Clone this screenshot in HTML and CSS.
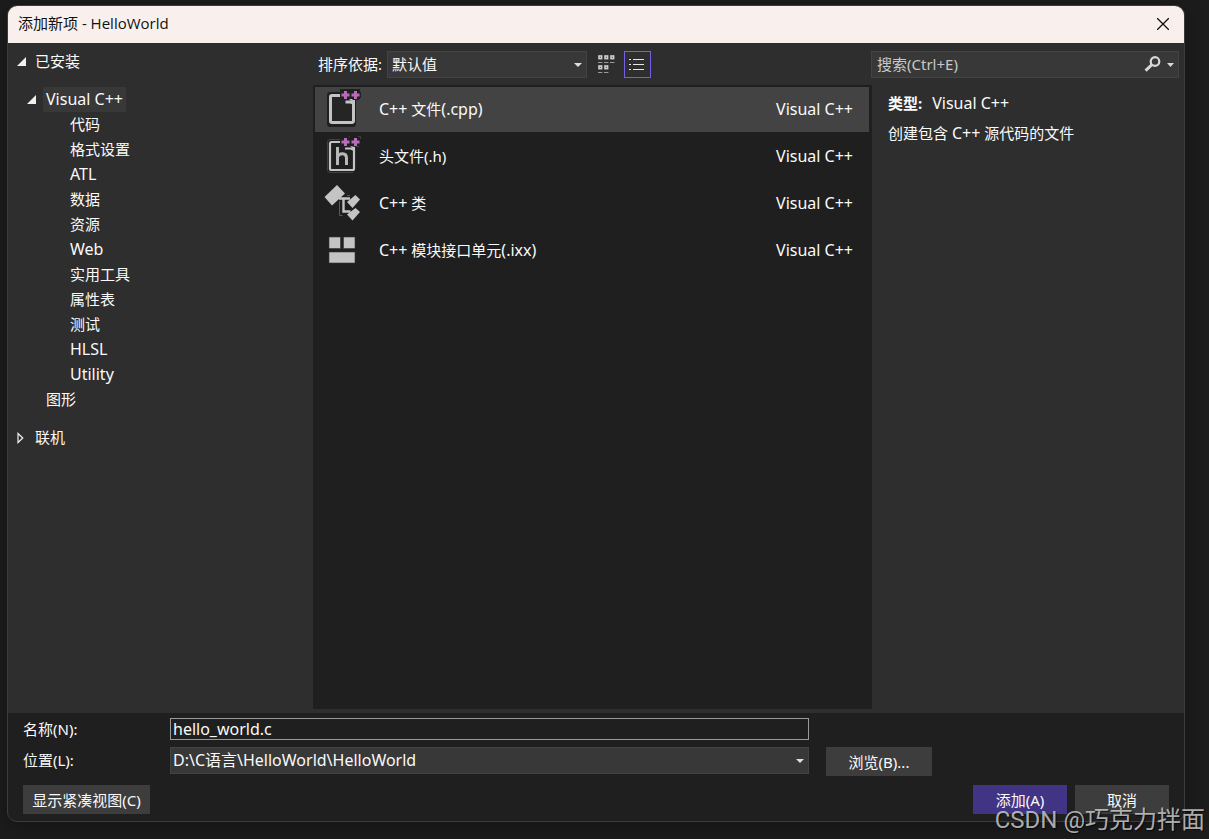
FILE: index.html
```
<!DOCTYPE html>
<html lang="zh-CN">
<head>
    <meta charset="UTF-8">
    <meta name="viewport" content="width=device-width, initial-scale=1.0">
    <title>添加新项 - HelloWorld</title>
    <link rel="stylesheet" href="styles.css">
</head>
<body>
    <div class="dialog">
        <header class="titlebar">
            <h1>添加新项 - HelloWorld</h1>
            <button type="button" class="close" aria-label="关闭">
                <svg width="12" height="12" viewBox="0 0 12 12"><path d="M0 0L12 12M12 0L0 12" stroke="#111" stroke-width="1.3"/></svg>
            </button>
        </header>

        <main class="content">
            <nav class="tree">
                <details open>
                    <summary><span class="arrow open"></span>已安装</summary>
                    <details class="level2" open>
                        <summary><span class="arrow open"></span><span class="selected latin">Visual C++</span></summary>
                        <ul>
                            <li>代码</li>
                            <li>格式设置</li>
                            <li class="latin">ATL</li>
                            <li>数据</li>
                            <li>资源</li>
                            <li class="latin">Web</li>
                            <li>实用工具</li>
                            <li>属性表</li>
                            <li>测试</li>
                            <li class="latin">HLSL</li>
                            <li class="latin">Utility</li>
                        </ul>
                    </details>
                    <div class="leaf">图形</div>
                </details>
                <details class="online">
                    <summary>
                        <span class="arrow"><svg width="7" height="12" viewBox="0 0 7 12"><path d="M1 1.5L5.8 6L1 10.5Z" fill="none" stroke="#f1f1f1" stroke-width="1.2"/></svg></span>联机
                    </summary>
                </details>
            </nav>

            <section class="browser">
                <div class="toolbar">
                    <label for="sort">排序依据:</label>
                    <div class="dropdown sort">
                        <select id="sort"><option>默认值</option></select>
                    </div>
                    <button type="button" class="view" aria-label="中等图标">
                        <svg width="18" height="19" viewBox="0 0 18 19" fill="none" stroke="#d0d0d0">
                            <g stroke-width="1.6"><rect x="1" y="1" width="2.6" height="2.6"/><rect x="7" y="1" width="2.6" height="2.6"/><rect x="13" y="1" width="2.6" height="2.6"/><rect x="1" y="11" width="2.6" height="2.6"/><rect x="7" y="11" width="2.6" height="2.6"/></g>
                            <path d="M0 7.5h4.4M6 7.5h4.4M12 7.5h4.4M0 17.5h4.4M6 17.5h4.4" stroke="#999"/>
                        </svg>
                    </button>
                    <button type="button" class="view active" aria-label="列表">
                        <svg width="17" height="14" viewBox="0 0 17 14" stroke="#e6e6e6"><path d="M4 1.5h11M4 6.5h11M4 11.5h11M0 1.5h2M0 6.5h2M0 11.5h2"/></svg>
                    </button>
                    <div class="search">
                        <input type="text" placeholder="搜索(Ctrl+E)" aria-label="搜索">
                        <button type="button" aria-label="搜索选项">
                            <svg width="32" height="18" viewBox="0 0 32 18">
                                <circle cx="12" cy="5.5" r="4.3" fill="none" stroke="#d8d8d8" stroke-width="2.2"/>
                                <path d="M9 8.5L2.6 14.6" stroke="#d8d8d8" stroke-width="3"/>
                                <path d="M24 7h7l-3.5 4z" fill="#d8d8d8"/>
                            </svg>
                        </button>
                    </div>
                </div>

                <div class="panes">
                    <div class="templates">
                        <button type="button" class="item current">
                            <svg class="icon" width="38" height="41" viewBox="0 0 38 41">
                                <path d="M6 3h10V0h20v10h-4v25a3 3 0 0 1-3 3H6a3 3 0 0 1-3-3V6a3 3 0 0 1 3-3z" fill="#202020"/>
                                <path d="M8 8h20v24H8z" fill="#252526"/>
                                <path d="M16 6.5H8a1.5 1.5 0 0 0-1.5 1.5v24a1.5 1.5 0 0 0 1.5 1.5h20a1.5 1.5 0 0 0 1.5-1.5V14l-3-1h-5" fill="none" stroke="#c4c4c4" stroke-width="3"/>
                                <path d="M25 10l6 5v-5z" fill="#c4c4c4"/>
                                <path d="M16 6h11M21.5 0v11M26 6h11M31.5 0v11" stroke="#202020" stroke-width="6"/>
                                <path d="M17.5 6h8M21.5 2v8M27.5 6h8M31.5 2v8" stroke="#b86cb8" stroke-width="3"/>
                            </svg>
                            <span class="name"><span class="latin">C++</span> 文件<span class="latin">(.cpp)</span></span>
                            <span class="kind latin">Visual C++</span>
                        </button>
                        <button type="button" class="item">
                            <svg class="icon" width="38" height="41" viewBox="0 0 38 41">
                                <path d="M16 3.5H6a2.5 2.5 0 0 0-2.5 2.5v28a2.5 2.5 0 0 0 2.5 2.5h23M25 1.5V0M34 .5h2.5V3M32 10.5h3" fill="none" stroke="#414141"/>
                                <path d="M16 6H7.5a1.5 1.5 0 0 0-1.5 1.5V32.5a1.5 1.5 0 0 0 1.5 1.5h21a1.5 1.5 0 0 0 1.5-1.5V14l-3-1.5h-6" fill="none" stroke="#c4c4c4" stroke-width="2.2"/>
                                <path d="M26 10l5 5v-4z" fill="#c4c4c4"/>
                                <path d="M13.5 11v18M13.5 21c2-4.5 9-4.5 9 1V29" fill="none" stroke="#b8b8b8" stroke-width="3"/>
                                <path d="M17.5 6h8M21.5 2v8M27.5 6h8M31.5 2v8" stroke="#b86cb8" stroke-width="3"/>
                            </svg>
                            <span class="name">头文件(.h)</span>
                            <span class="kind latin">Visual C++</span>
                        </button>
                        <button type="button" class="item">
                            <svg class="icon" width="38" height="41" viewBox="0 0 38 41">
                                <path d="M15.5 18v14.5h3M23 12.5h3" fill="none" stroke="#585858"/>
                                <path d="M15 15.5h11M19.5 15.5v13h7" fill="none" stroke="#c4c4c4" stroke-width="2.4"/>
                                <path d="M13 2l8 8.5-13 12-7.5-8.5z" fill="#c4c4c4"/>
                                <path d="M31.5 12l4.5 4.5-7.5 8.5-5.5-6zM31.5 25l4.5 4-7.5 8.5-5.5-6z" fill="#c4c4c4"/>
                            </svg>
                            <span class="name"><span class="latin">C++</span> 类</span>
                            <span class="kind latin">Visual C++</span>
                        </button>
                        <button type="button" class="item">
                            <svg class="icon" width="38" height="41" viewBox="0 0 38 41" fill="#c4c4c4" stroke="#353535" stroke-width=".6">
                                <path d="M5 7h11.5v11.5H5zM19.5 7H31v11.5H19.5zM5 22h26V33H5z"/>
                            </svg>
                            <span class="name"><span class="latin">C++</span> 模块接口单元<span class="latin">(.ixx)</span></span>
                            <span class="kind latin">Visual C++</span>
                        </button>
                    </div>
                    <aside class="info">
                        <p><strong>类型:</strong><span class="latin">Visual C++</span></p>
                        <p>创建包含 <span class="latin">C++</span> 源代码的文件</p>
                    </aside>
                </div>
            </section>
        </main>

        <form class="bottom">
            <div class="fields">
                <label for="name">名称(N):</label>
                <input type="text" id="name" class="latin" value="hello_world.c">
                <label for="location">位置(L):</label>
                <div class="dropdown">
                    <select id="location" class="latin"><option>D:\C语言\HelloWorld\HelloWorld</option></select>
                </div>
                <button type="button" class="btn">浏览(B)...</button>
            </div>
            <div class="actions">
                <button type="button" class="btn compact">显示紧凑视图(C)</button>
                <button type="submit" class="btn primary">添加(A)</button>
                <button type="button" class="btn">取消</button>
            </div>
        </form>
    </div>
    <div class="watermark">CSDN @巧克力拌面</div>
</body>
</html>
```
FILE: styles.css
```
* {
    box-sizing: border-box;
}
body {
    margin: 0;
    min-height: 100vh;
    display: flex;
    padding: 5px 24px 17px 7px;
    background: #1c1c1c;
    color: #fafafa;
    font-family: "Noto Sans", "Noto Sans CJK SC", sans-serif;
    font-size: 15px;
    line-height: 25px;
}
button, input, select {
    font: inherit;
    color: inherit;
    border: none;
    border-radius: 0;
    margin: 0;
    padding: 0;
    background: none;
}
ul, p, h1 {
    margin: 0;
    padding: 0;
    list-style: none;
}
svg {
    display: block;
}
.latin {
    font-size: 16px;
}
.dialog {
    flex: 1;
    display: flex;
    flex-direction: column;
    border: 1px solid #3c3c3c;
    border-radius: 10px;
    background: #1f1f1f;
    box-shadow: 0 4px 20px rgba(0, 0, 0, 0.3);
    overflow: hidden;
}
.titlebar {
    display: flex;
    justify-content: space-between;
    align-items: center;
    height: 37px;
    padding: 0 15px 2px 10px;
    background: #f9f0ee;
    color: #111;
}
.titlebar h1 {
    font-family: "Open Sans", "Noto Sans CJK SC", sans-serif;
    font-size: 15px;
    font-weight: normal;
}
.content {
    flex: 1;
    display: flex;
    background: #2e2e2e;
}

/* category tree */
.tree {
    width: 305px;
    padding: 6px 0 0 9px;
}
.tree summary {
    display: flex;
    align-items: center;
    list-style: none;
}
.arrow {
    width: 18px;
}
.arrow.open::before {
    content: "";
    display: block;
    width: 9px;
    height: 9px;
    background: #f1f1f1;
    clip-path: polygon(100% 0, 100% 100%, 0 100%);
}
.level2 {
    margin-top: 13px;
    padding-left: 10px;
}
.level2 .arrow {
    width: 16px;
}
.selected {
    padding: 0 3px;
    background: #383838;
}
.level2 li {
    height: 25px;
    padding-left: 43px;
}
.leaf {
    padding-left: 29px;
}
.online {
    margin-top: 13px;
}

/* toolbar and template list */
.browser {
    flex: 1;
    display: flex;
    flex-direction: column;
    padding-bottom: 4px;
}
.toolbar {
    display: flex;
    padding: 8px 5px 7px;
}
.toolbar label {
    width: 69px;
    line-height: 27px;
}
.dropdown {
    position: relative;
    height: 27px;
    border: 1px solid #434343;
    background: #383838;
}
.dropdown select {
    display: block;
    width: 100%;
    height: 25px;
    padding: 0 24px 0 4px;
    appearance: none;
}
.dropdown::after {
    content: "";
    position: absolute;
    top: 11px;
    right: 4px;
    border: 4px solid transparent;
    border-top-color: #e0e0e0;
    border-bottom: none;
    pointer-events: none;
}
.sort {
    width: 200px;
}
.view {
    display: flex;
    align-items: center;
    justify-content: center;
    width: 27px;
    height: 27px;
    margin-left: 6px;
}
.view + .view {
    margin-left: 4px;
}
.active {
    border: 1px solid #7160e8;
}
.search {
    display: flex;
    align-items: center;
    width: 308px;
    height: 27px;
    margin-left: auto;
    padding: 0 3px 0 5px;
    border: 1px solid #434343;
    background: #383838;
}
.search input {
    flex: 1;
    min-width: 0;
}
.search input::placeholder {
    color: #c8c8c8;
    opacity: 1;
}
.panes {
    flex: 1;
    display: flex;
}
.templates {
    flex: 1;
    display: flex;
    flex-direction: column;
    gap: 2px;
    padding: 2px 3px 2px 2px;
    background: #1f1f1f;
}
.item {
    display: flex;
    align-items: center;
    height: 45px;
    padding: 0 16px 0 9px;
    text-align: left;
}
.current {
    background: #434343;
}
.name {
    flex: 1;
    padding-left: 17px;
}
.info {
    width: 312px;
    padding: 6px 16px;
}
.info p {
    height: 25px;
    margin-bottom: 5px;
}
.info strong {
    margin-right: 10px;
}

/* name, location and buttons */
.bottom {
    padding: 5px 15px 7px;
}
.fields {
    display: grid;
    grid-template-columns: 147px 1fr 106px;
    row-gap: 7px;
    margin-right: 237px;
}
.fields input {
    height: 22px;
    padding: 0 2px;
    border: 1px solid #999;
}
.fields label {
    grid-column: 1;
    line-height: 22px;
}
.fields label[for="location"] {
    line-height: 27px;
}
.fields .dropdown {
    margin-right: 17px;
}
.fields #name {
    margin-right: 17px;
}
.fields .dropdown select {
    padding: 0 24px 2px 2px;
}
.btn {
    height: 29px;
    padding-top: 1px;
    background: #3d3d3d;
}
.actions {
    display: flex;
    gap: 8px;
    margin-top: 9px;
}
.actions .btn {
    width: 94px;
}
.actions .compact {
    width: 127px;
    margin-right: auto;
}
.actions .primary {
    background: #413484;
}
.watermark {
    position: absolute;
    right: 4px;
    bottom: 3px;
    color: rgba(215, 215, 215, 0.8);
    font-family: Roboto, "Noto Sans CJK SC", sans-serif;
    font-size: 24px;
    line-height: 32px;
    text-shadow: 1px 1px 1px rgba(0, 0, 0, 0.7);
    pointer-events: none;
}
```
